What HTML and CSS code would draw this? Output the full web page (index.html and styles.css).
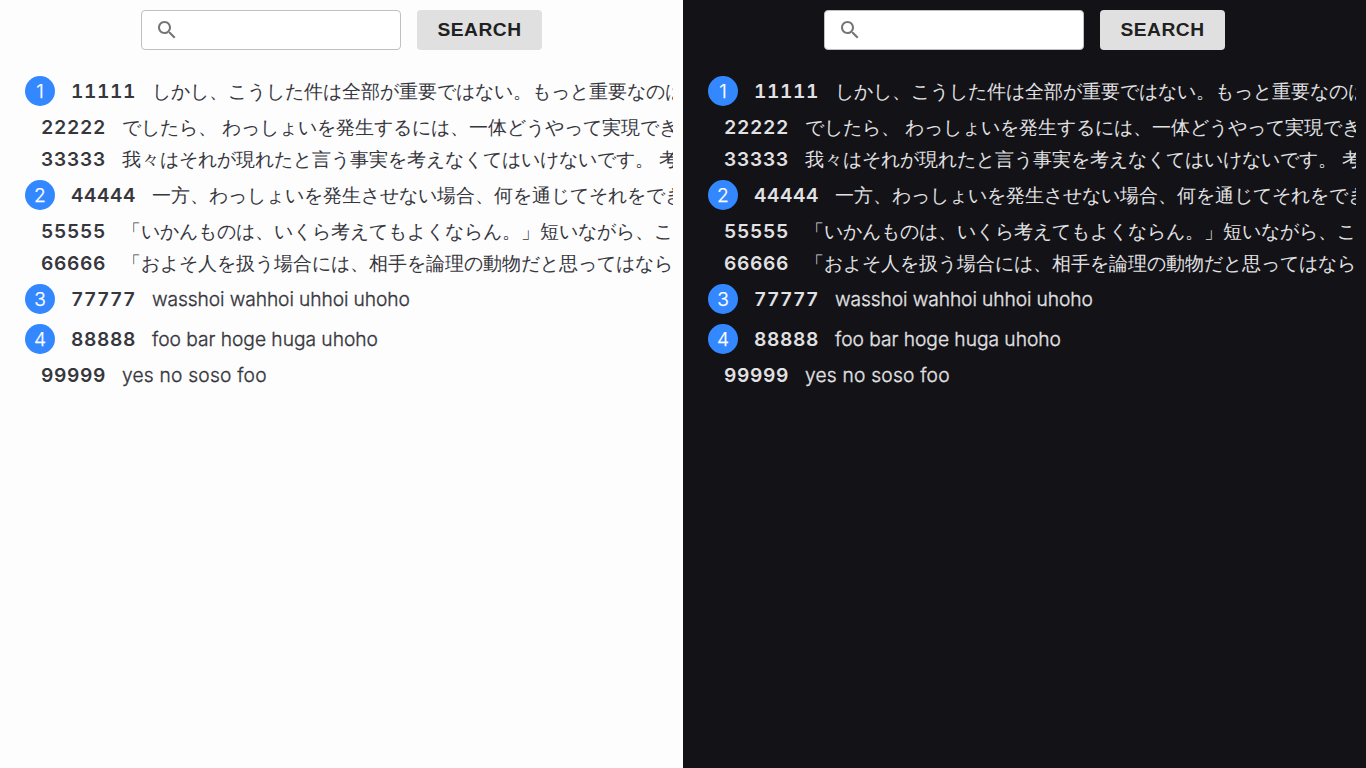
FILE: index.html
```html
<!DOCTYPE html>
<html lang="ja">
<head>
<meta charset="utf-8">
<title>Search</title>
<link rel="stylesheet" href="styles.css">
</head>
<body>
<main class="panel light"></main>
<main class="panel dark"></main>
<template id="view">
  <form class="search">
    <div class="field">
      <svg class="icon" viewBox="0 0 24 24"><path d="M15.5 14h-.79l-.28-.27C15.41 12.59 16 11.11 16 9.5 16 5.91 13.09 3 9.5 3S3 5.91 3 9.5 5.91 16 9.5 16c1.61 0 3.09-.59 4.23-1.57l.27.28v.79l5 4.99L20.49 19l-4.99-5zm-6 0C7.01 14 5 11.99 5 9.5S7.01 5 9.5 5 14 7.01 14 9.5 11.99 14 9.5 14z"/></svg>
      <input class="input" type="text" aria-label="Search">
    </div>
    <button class="button" type="button">SEARCH</button>
  </form>
  <div class="list">
    <div class="row lead"><span class="badge">1</span><b class="code">11111</b><span class="text">しかし、こうした件は全部が重要ではない。もっと重要なのは、</span></div>
    <div class="row"><b class="code">22222</b><span class="text">でしたら、 わっしょいを発生するには、一体どうやって実現できるのか</span></div>
    <div class="row"><b class="code">33333</b><span class="text">我々はそれが現れたと言う事実を考えなくてはいけないです。 考えて</span></div>
    <div class="row lead"><span class="badge">2</span><b class="code">44444</b><span class="text">一方、わっしょいを発生させない場合、何を通じてそれをできるのか</span></div>
    <div class="row"><b class="code">55555</b><span class="text">「いかんものは、いくら考えてもよくならん。」短いながら、この</span></div>
    <div class="row"><b class="code">66666</b><span class="text">「およそ人を扱う場合には、相手を論理の動物だと思ってはならない</span></div>
    <div class="row lead"><span class="badge">3</span><b class="code">77777</b><span class="text latin">wasshoi wahhoi uhhoi uhoho</span></div>
    <div class="row lead"><span class="badge">4</span><b class="code">88888</b><span class="text latin medium">foo bar hoge huga uhoho</span></div>
    <div class="row"><b class="code">99999</b><span class="text latin loose">yes no soso foo</span></div>
  </div>
</template>
<script src="app.js"></script>
</body>
</html>
```
FILE: styles.css
```css
* { box-sizing: border-box; }
body {
  margin: 0;
  display: flex;
  height: 100vh;
  overflow: hidden;
  font-family: Inter, sans-serif;
  font-size: 19.2px;
}
.panel { flex: 1 1 50%; min-width: 0; padding: 10px; }
.light { background: #fdfdfd; color: #36363d; }
.dark { background: #131217; color: #e2e2e4; }
.search { display: flex; justify-content: center; gap: 16px; height: 40px; margin: 0 0 21px; }
.field {
  display: flex;
  align-items: center;
  width: 260px;
  padding-left: 13px;
  background: #fff;
  border: 1px solid #c0c0c0;
  border-radius: 4px;
}
.icon { width: 24px; height: 24px; flex: none; fill: #757575; }
.input { flex: 1; min-width: 0; border: 0; outline: 0; background: none; font: inherit; }
.button {
  width: 125px;
  padding: 0;
  border: 0;
  border-radius: 4px;
  background: #e0e0e0;
  color: #212121;
  font: bold 19.2px "Liberation Sans", sans-serif;
  letter-spacing: 0.5px;
}
.list { overflow: hidden; }
.row { display: flex; align-items: center; height: 32px; padding-left: 31px; white-space: nowrap; }
.lead { height: 40px; padding-left: 15px; }
.badge {
  flex: none;
  width: 30px;
  height: 30px;
  margin-right: 16px;
  border-radius: 50%;
  background: #3388ff;
  color: #fff;
  font-weight: 300;
  -webkit-text-stroke: 0.25px;
  line-height: 30px;
  text-align: center;
}
.code { flex: none; width: 65px; margin-right: 16px; font-weight: 600; font-feature-settings: "tnum"; letter-spacing: 0.6px; }
.text { flex: none; padding-top: 2px; }
.latin { padding-top: 0; font-weight: 300; letter-spacing: -0.1px; -webkit-text-stroke: 0.3px; }
.medium { letter-spacing: -0.02px; }
.loose { letter-spacing: 0.21px; }
```
FILE: app.js
```js
const view = document.getElementById('view');
document.querySelectorAll('.panel').forEach(panel => panel.append(view.content.cloneNode(true)));
```
